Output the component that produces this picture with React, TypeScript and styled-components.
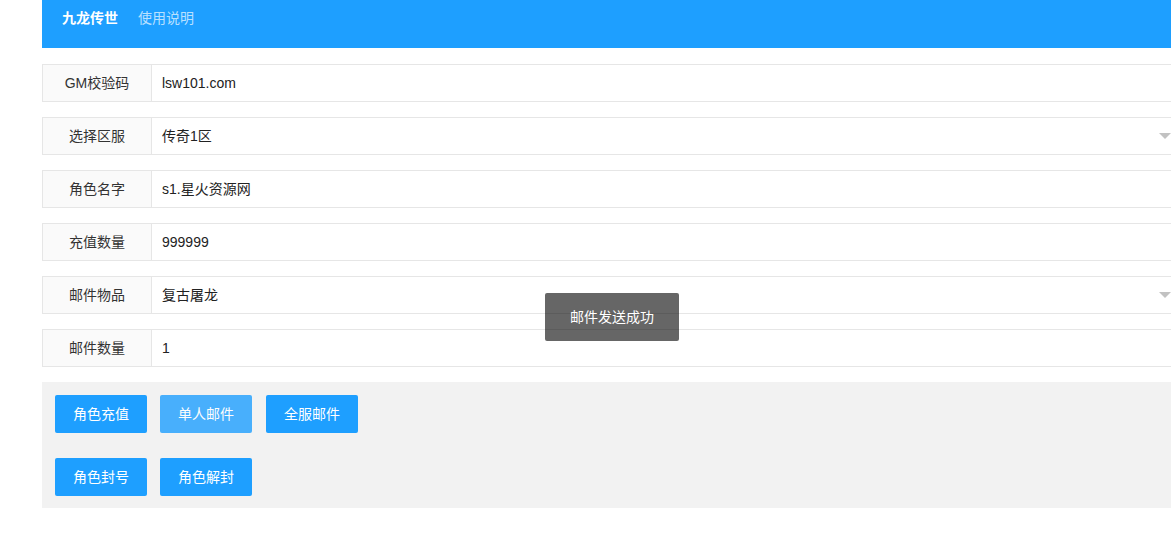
import React from "react";
import styled, { createGlobalStyle } from "styled-components";

type Field = {
  label: string;
  value: string;
  select?: boolean;
};

const fields: Field[] = [
  { label: "GM校验码", value: "lsw101.com" },
  { label: "选择区服", value: "传奇1区", select: true },
  { label: "角色名字", value: "s1.星火资源网" },
  { label: "充值数量", value: "999999" },
  { label: "邮件物品", value: "复古屠龙", select: true },
  { label: "邮件数量", value: "1" },
];

const buttonRows = [
  [
    { text: "角色充值" },
    { text: "单人邮件", hover: true },
    { text: "全服邮件" },
  ],
  [{ text: "角色封号" }, { text: "角色解封" }],
];

export default function App() {
  return (
    <>
      <GlobalStyle />
      <Page>
        <Header>
          <NavItem $active>九龙传世</NavItem>
          <NavItem>使用说明</NavItem>
        </Header>

        <Form>
          {fields.map((f) => (
            <FormItem key={f.label}>
              <Label>{f.label}</Label>
              <InputBox>
                {f.value}
                {f.select && <Arrow />}
              </InputBox>
            </FormItem>
          ))}
        </Form>

        <ButtonPanel>
          {buttonRows.map((row, i) => (
            <ButtonRow key={i}>
              {row.map((b) => (
                <Button key={b.text} $hover={!!("hover" in b && b.hover)}>
                  {b.text}
                </Button>
              ))}
            </ButtonRow>
          ))}
        </ButtonPanel>

        <Toast>邮件发送成功</Toast>
      </Page>
    </>
  );
}

const GlobalStyle = createGlobalStyle`
  html, body {
    margin: 0;
    padding: 0;
    background: #fff;
    overflow: hidden;
  }
  body {
    font-family: "Liberation Sans", "Noto Sans CJK SC", sans-serif;
    font-size: 14px;
    color: #333;
  }
`;

const Page = styled.div`
  position: relative;
  width: 1140px;
  margin-left: 42px;
`;

const Header = styled.div`
  display: flex;
  height: 48px;
  padding-left: 10px;
  background: #1e9fff;
`;

const NavItem = styled.div<{ $active?: boolean }>`
  padding: 0 10px;
  line-height: 36px;
  font-size: 14px;
  font-weight: ${(p) => (p.$active ? "bold" : "normal")};
  color: ${(p) => (p.$active ? "#fff" : "rgba(255,255,255,0.7)")};
`;

const Form = styled.div`
  display: flex;
  flex-direction: column;
  gap: 15px;
  padding-top: 16px;
`;

const FormItem = styled.div`
  display: flex;
  height: 38px;
  box-sizing: border-box;
  border: 1px solid #e6e6e6;
`;

const Label = styled.div`
  width: 108px;
  flex: none;
  background: #fafafa;
  border-right: 1px solid #e6e6e6;
  text-align: center;
  line-height: 36px;
  color: #333;
`;

const InputBox = styled.div`
  position: relative;
  flex: 1;
  padding-left: 10px;
  line-height: 36px;
  color: #222;
`;

const Arrow = styled.span`
  position: absolute;
  right: 10px;
  top: 15px;
  width: 0;
  height: 0;
  border-style: solid;
  border-width: 6px 6px 0 6px;
  border-color: #c2c2c2 transparent transparent transparent;
`;

const ButtonPanel = styled.div`
  margin-top: 15px;
  background: #f2f2f2;
  padding: 13px 13px 12px;
  display: flex;
  flex-direction: column;
  gap: 25px;
`;

const ButtonRow = styled.div`
  display: flex;
  gap: 13px;
`;

const Button = styled.div<{ $hover?: boolean }>`
  height: 38px;
  line-height: 38px;
  padding: 0 18px;
  background: #1e9fff;
  color: #fff;
  border-radius: 2px;
  font-size: 14px;
  opacity: ${(p) => (p.$hover ? 0.8 : 1)};

  & + & + & {
    margin-left: 1px;
  }
`;

const Toast = styled.div`
  position: absolute;
  left: 503px;
  top: 293px;
  padding: 12px 25px;
  line-height: 24px;
  background: rgba(0, 0, 0, 0.6);
  color: #fff;
  border-radius: 2px;
  font-size: 14px;
`;
